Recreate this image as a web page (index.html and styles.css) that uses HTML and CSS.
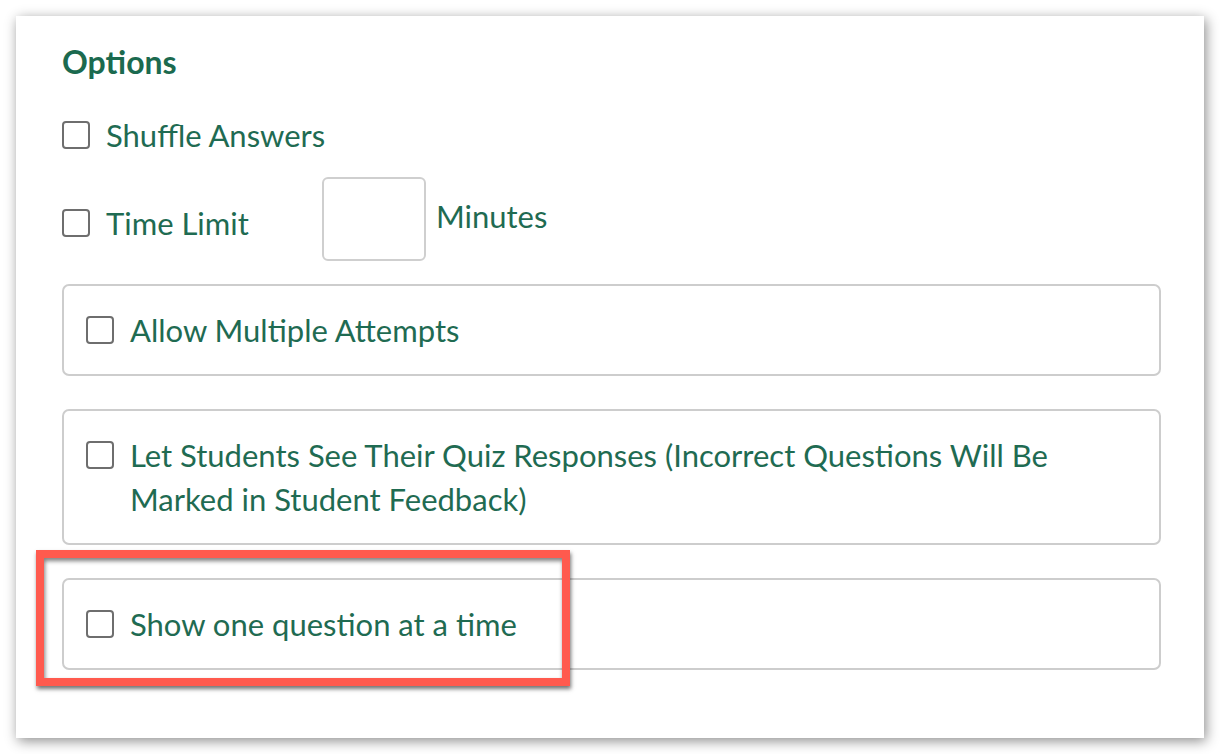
FILE: index.html
```html
<!DOCTYPE html>
<html lang="en">
<head>
  <meta charset="UTF-8">
  <title>Quiz Options</title>
  <link rel="stylesheet" href="styles.css">
</head>
<body>
  <div class="card">
    <h2 class="title">Options</h2>

    <label class="row">
      <input type="checkbox" class="check">
      <span>Shuffle Answers</span>
    </label>

    <div class="time-row">
      <label class="row time-label">
        <input type="checkbox" class="check">
        <span>Time Limit</span>
      </label>
      <input type="text" class="minutes-input">
      <span class="minutes">Minutes</span>
    </div>

    <label class="option-box">
      <input type="checkbox" class="check">
      <span>Allow Multiple Attempts</span>
    </label>

    <label class="option-box">
      <input type="checkbox" class="check">
      <span>Let Students See Their Quiz Responses (Incorrect Questions Will Be Marked in Student Feedback)</span>
    </label>

    <label class="option-box">
      <input type="checkbox" class="check">
      <span>Show one question at a time</span>
    </label>

    <div class="highlight"></div>
  </div>
</body>
</html>
```

FILE: styles.css
```css
body {
  margin: 0;
  background-color: #fff;
  font-family: Lato, "Open Sans", sans-serif;
  color: #1f6b52;
}

.card {
  position: relative;
  margin: 16px;
  height: 722px;
  box-sizing: border-box;
  padding: 28px 43px 0 46px;
  background-color: #fff;
  box-shadow: 2px 3px 12px rgba(0, 0, 0, 0.45);
}

.title {
  margin: 0 0 37px;
  font-size: 32px;
  line-height: 36px;
  font-weight: 700;
  color: #1b6a4f;
}

.row {
  display: flex;
  align-items: center;
  gap: 16px;
  font-size: 31px;
  line-height: 36px;
}

.check {
  appearance: none;
  -webkit-appearance: none;
  flex: none;
  width: 28px;
  height: 28px;
  margin: 0;
  border: 2px solid #6e6e6e;
  border-radius: 4px;
  background-color: #fff;
}

.time-row {
  display: flex;
  align-items: center;
  margin-top: 24px;
  margin-bottom: 23px;
}

.time-label {
  width: 260px;
  padding-top: 8px;
}

.minutes-input {
  width: 104px;
  height: 84px;
  box-sizing: border-box;
  margin: 0;
  border: 2px solid #cfcfcf;
  border-radius: 6px;
  background-color: #fff;
}

.minutes {
  margin-left: 10px;
  margin-bottom: 6px;
  font-size: 31px;
  line-height: 36px;
}

.option-box {
  display: flex;
  align-items: flex-start;
  gap: 16px;
  padding: 22px 22px;
  border: 2px solid #cdcdcd;
  border-radius: 7px;
  font-size: 31px;
  line-height: 44px;
}

.option-box .check {
  margin-top: 8px;
}

.option-box + .option-box {
  margin-top: 33px;
}

.highlight {
  position: absolute;
  left: 20px;
  top: 534px;
  width: 534px;
  height: 136px;
  box-sizing: border-box;
  border: 8px solid #ff5a4e;
  box-shadow: 1px 3px 4px rgba(0, 0, 0, 0.55), inset 1px 3px 4px rgba(0, 0, 0, 0.5);
}
```
